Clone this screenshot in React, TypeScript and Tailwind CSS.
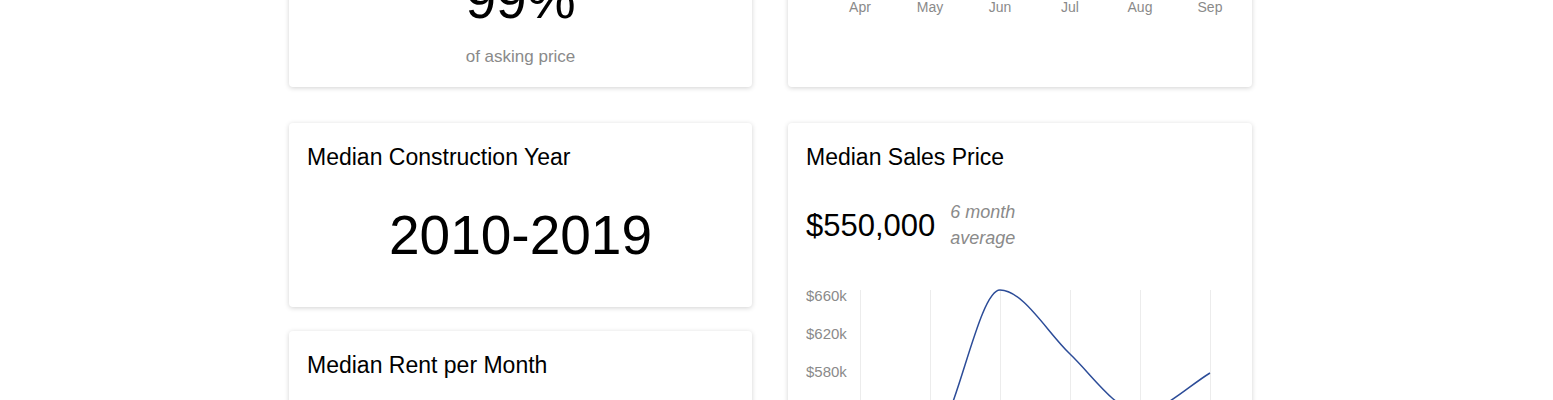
import React from "react";

const months = ["Apr", "May", "Jun", "Jul", "Aug", "Sep"];
const gridX = [54, 124, 194, 264, 334, 404];

function Card({ className = "", children }: { className?: string; children: React.ReactNode }) {
  return (
    <div className={`bg-white rounded-[4px] shadow-[0_1px_5px_rgba(0,0,0,0.18)] ${className}`}>{children}</div>
  );
}

function TopChart() {
  return (
    <svg width="428" height="200" className="block">
      {gridX.map((x) => (
        <line key={x} x1={x + 0.5} x2={x + 0.5} y1={0} y2={100} stroke="#ececec" strokeWidth="1" />
      ))}
      {months.map((m, i) => (
        <text
          key={m}
          x={gridX[i]}
          y={121}
          textAnchor="middle"
          dominantBaseline="middle"
          fontSize="14"
          fill="#8a8a8a"
          fontFamily="'Liberation Sans', Arial, sans-serif"
        >
          {m}
        </text>
      ))}
    </svg>
  );
}

function SalesChart() {
  const labels = [
    { t: "$660k", y: 47 },
    { t: "$620k", y: 85 },
    { t: "$580k", y: 123 },
  ];
  return (
    <svg width="428" height="230" className="block">
      {gridX.map((x) => (
        <line key={x} x1={x + 0.5} x2={x + 0.5} y1={40} y2={230} stroke="#ececec" strokeWidth="1" />
      ))}
      {labels.map((l) => (
        <text
          key={l.t}
          x={0}
          y={l.y}
          dominantBaseline="middle"
          fontSize="15"
          fill="#8a8a8a"
          fontFamily="'Liberation Sans', Arial, sans-serif"
        >
          {l.t}
        </text>
      ))}
      <path
        d="M54,170 C77,170 101,190 124,190 C147,190 171,40 194,40 C217,40 241,82 264,104 C287,126 311,162 334,162 C357,162 381,137 404,123"
        fill="none"
        stroke="#2c4c98"
        strokeWidth="1.5"
      />
    </svg>
  );
}

export default function App() {
  return (
    <div className="h-[400px] overflow-hidden bg-white font-['Liberation_Sans',Arial,sans-serif] text-black">
      <div className="ml-[289px] w-[963px] -mt-[113px] flex flex-col gap-[36px]">
        <div className="grid grid-cols-[463px_464px] gap-x-[36px]">
          <Card className="h-[200px] flex flex-col justify-end items-center pb-[18px]">
            <div className="text-[55px] leading-[55px] mb-[18px]">99%</div>
            <div className="text-[17px] leading-[24px] text-[#8a8a8a]">of asking price</div>
          </Card>
          <Card className="h-[200px] px-[18px]">
            <TopChart />
          </Card>
        </div>
        <div className="grid grid-cols-[463px_464px] gap-x-[36px] items-start">
          <div className="flex flex-col gap-[24px]">
            <Card className="h-[184px] px-[18px] pt-[22px]">
              <div className="text-[23px] leading-[25px]">Median Construction Year</div>
              <div className="mt-[38px] text-center text-[55px] leading-[55px]">2010-2019</div>
            </Card>
            <Card className="h-[184px] px-[18px] pt-[22px]">
              <div className="text-[23px] leading-[25px]">Median Rent per Month</div>
            </Card>
          </div>
          <Card className="h-[420px] px-[18px] pt-[22px]">
            <div className="text-[23px] leading-[25px]">Median Sales Price</div>
            <div className="mt-[29px] flex items-center gap-[15px]">
              <div className="text-[31px] leading-[36px] pt-[2px]">$550,000</div>
              <div className="text-[18px] leading-[26px] italic text-[#8a8a8a]">
                6 month
                <br />
                average
              </div>
            </div>
            <div className="-mt-[1px]">
              <SalesChart />
            </div>
          </Card>
        </div>
      </div>
    </div>
  );
}
